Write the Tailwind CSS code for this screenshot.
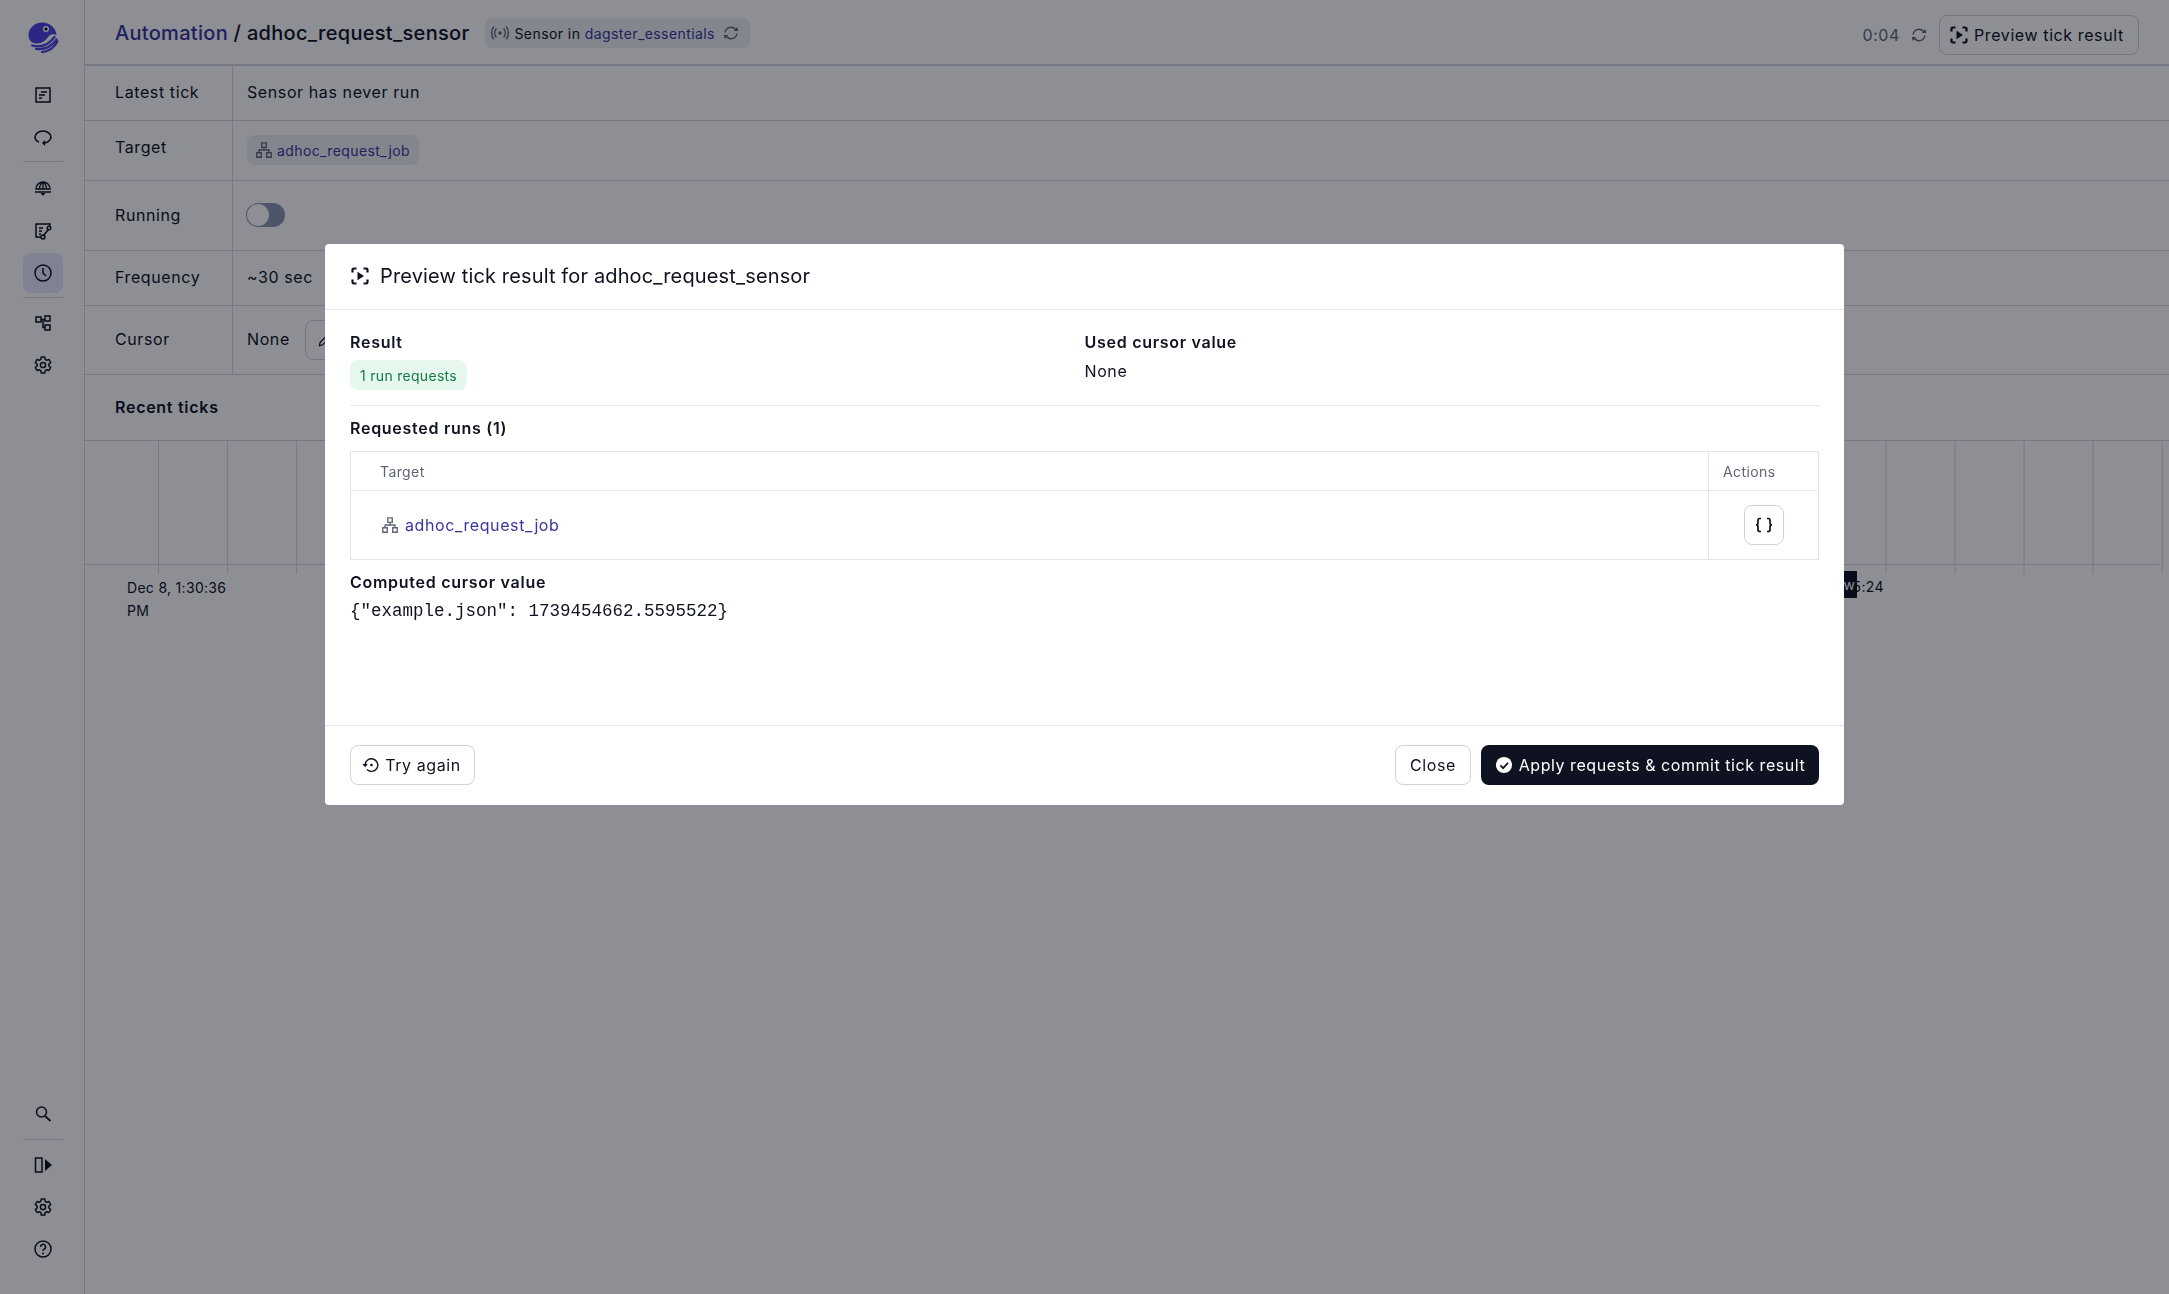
<!DOCTYPE html>
<html lang="en">
<head>
    <meta charset="UTF-8">
    <meta name="viewport" content="width=device-width, initial-scale=1.0">
    <title>adhoc_request_sensor</title>
    <script src="https://cdn.jsdelivr.net/npm/@tailwindcss/browser@4"></script>
</head>
<body class="h-[1294px] overflow-hidden bg-white font-['Inter','Liberation_Sans',sans-serif] text-[16px] tracking-[0.6px] text-[#0f1221]">
    <svg class="hidden">
        <symbol id="preview" viewBox="0 0 20 20">
            <path d="M2.500 6.500V3.800a1.300 1.300 0 0 1 1.300-1.300h2.700M13.500 2.500h2.700a1.300 1.300 0 0 1 1.300 1.300v2.700M2.500 13.500v2.700a1.300 1.300 0 0 0 1.300 1.300h2.700M13.500 17.500h2.700a1.300 1.300 0 0 0 1.300-1.300v-2.700" fill="none" stroke="currentColor" stroke-width="2.200"/>
            <path d="M7.500 5.800 14 10l-6.500 4.200z" fill="currentColor"/>
        </symbol>
        <symbol id="job" viewBox="0 0 20 20">
            <path d="M7.500 2h5v5h-5zM2 13h5v5H2zM13 13h5v5h-5zM10 7v3M4.500 13v-3h11v3" fill="none" stroke="currentColor" stroke-width="1.500"/>
        </symbol>
        <symbol id="refresh" viewBox="0 0 20 20">
            <path d="M3.500 9.500a6.500 6.500 0 0 1 11.300-3.700M16.500 10.500a6.500 6.500 0 0 1-11.300 3.700" fill="none" stroke="currentColor" stroke-width="1.600"/>
            <path d="M13 7.800h5l-1-4.500zM7 12.200H2l1 4.500z" fill="currentColor"/>
        </symbol>
        <symbol id="gear" viewBox="0 0 20 20">
            <path d="M8.300 2h3.400l.5 2.400 1.500.9 2.300-.8 1.700 3-1.800 1.600v1.800l1.800 1.600-1.700 3-2.300-.8-1.500.9-.5 2.400H8.300l-.5-2.400-1.500-.9-2.300.8-1.700-3 1.800-1.600V9.100L2.300 7.500l1.700-3 2.300.8 1.500-.9z" fill="none" stroke="currentColor" stroke-width="1.500" stroke-linejoin="round"/>
            <circle cx="10" cy="10" r="2.600" fill="none" stroke="currentColor" stroke-width="1.500"/>
        </symbol>
    </svg>

    <div class="flex h-[1294px]">
        <!-- left nav -->
        <nav class="flex w-[85px] shrink-0 flex-col items-center border-r border-[#d6d7de] pl-[2px]">
            <svg class="mt-[21px] h-[32px] w-[32px] text-[#4f43dd]" viewBox="0 0 32 32">
                <path d="M15 1.500C8 1.500 1.500 7 1.500 14c0 5 3.500 8.500 8 8.500 6 0 9-3 12-7 2-2.500 5-3 8-1.500C29 7 23 1.500 15 1.500z" fill="currentColor"/>
                <path d="M5 24.500c9 2.500 17-1 22.500-8.500M9 28c9 1 16-3 20.500-9.500M15 31c6-.5 12-4 15.500-10.500" fill="none" stroke="currentColor" stroke-width="2.200" stroke-linecap="round"/>
                <circle cx="19" cy="8" r="3" fill="#fff"/>
                <circle cx="19" cy="8" r="1.500" fill="#030615"/>
            </svg>
            <div class="mt-[22px] flex flex-col gap-[2px]">
                <a class="flex h-[40px] w-[40px] items-center justify-center">
                    <svg class="h-[20px] w-[20px]" viewBox="0 0 20 20"><path d="M3 3h14v14H3z" fill="none" stroke="currentColor" stroke-width="1.500"/><path d="M8 7h6M6 10h6M6 13h3" stroke="currentColor" stroke-width="1.500"/></svg>
                </a>
                <a class="flex h-[40px] w-[40px] items-center justify-center">
                    <svg class="h-[20px] w-[20px]" viewBox="0 0 20 20"><path d="M6 15C3 14 2 12 2 10c0-3 3.500-6 8-6s8 3 8 6-3.500 6-7 6" fill="none" stroke="currentColor" stroke-width="1.600"/><path d="M12 13l-3 3 3 3z" fill="currentColor"/></svg>
                </a>
            </div>
            <div class="mt-[4px] h-px w-[40px] bg-[#d6d7de]"></div>
            <div class="mt-[6px] flex flex-col gap-[2.5px]">
                <a class="flex h-[40px] w-[40px] items-center justify-center">
                    <svg class="h-[20px] w-[20px]" viewBox="0 0 20 20"><path d="M3 11a7 7 0 0 1 14 0zM10 4v7M6.500 11c0-3 1.500-5.500 3.500-7 2 1.500 3.500 4 3.500 7" fill="none" stroke="currentColor" stroke-width="1.400"/><path d="M2 14h16" stroke="currentColor" stroke-width="1.500"/><path d="M7.500 15h5L10 18z" fill="currentColor"/></svg>
                </a>
                <a class="flex h-[40px] w-[40px] items-center justify-center">
                    <svg class="h-[20px] w-[20px]" viewBox="0 0 20 20"><path d="M8 16H3V3h14v2" fill="none" stroke="currentColor" stroke-width="1.500"/><path d="M6 7h4M6 10h3M6 13h2M10 15l6-7" fill="none" stroke="currentColor" stroke-width="1.500"/><circle cx="16" cy="7" r="1.800" fill="none" stroke="currentColor" stroke-width="1.400"/><circle cx="10" cy="16" r="2" fill="none" stroke="currentColor" stroke-width="1.400"/></svg>
                </a>
                <a class="flex h-[40px] w-[40px] items-center justify-center rounded-[8px] bg-[#e8e7fc]">
                    <svg class="h-[20px] w-[20px]" viewBox="0 0 20 20"><circle cx="10" cy="10" r="8" fill="none" stroke="currentColor" stroke-width="1.500"/><path d="M10 5v5l3 3" fill="none" stroke="currentColor" stroke-width="1.500"/></svg>
                </a>
            </div>
            <div class="mt-[4px] h-px w-[40px] bg-[#d6d7de]"></div>
            <div class="mt-[5px] flex flex-col gap-[2px]">
                <a class="flex h-[40px] w-[40px] items-center justify-center">
                    <svg class="h-[20px] w-[20px]" viewBox="0 0 20 20"><path d="M3 4h5v5H3zM12 3h5v5h-5zM12 12h5v5h-5zM8 6.500h4M10 6.500v8h2" fill="none" stroke="currentColor" stroke-width="1.500"/></svg>
                </a>
                <a class="flex h-[40px] w-[40px] items-center justify-center">
                    <svg class="h-[20px] w-[20px]"><use href="#gear"/></svg>
                </a>
            </div>
            <div class="mt-auto flex flex-col items-center pb-[25px]">
                <a class="flex h-[40px] w-[40px] items-center justify-center">
                    <svg class="h-[20px] w-[20px]" viewBox="0 0 20 20"><circle cx="8.500" cy="8" r="5" fill="none" stroke="currentColor" stroke-width="1.500"/><path d="M12 12l5.500 5" stroke="currentColor" stroke-width="1.700"/></svg>
                </a>
                <div class="mt-[5px] h-px w-[40px] bg-[#d6d7de]"></div>
                <a class="mt-[5px] flex h-[40px] w-[40px] items-center justify-center">
                    <svg class="h-[20px] w-[20px]" viewBox="0 0 20 20"><path d="M2.500 3h6.500v14H2.500z" fill="none" stroke="currentColor" stroke-width="1.500"/><path d="M12 4l7 6-7 6z" fill="currentColor"/></svg>
                </a>
                <a class="mt-[2px] flex h-[40px] w-[40px] items-center justify-center">
                    <svg class="h-[20px] w-[20px]"><use href="#gear"/></svg>
                </a>
                <a class="mt-[2px] flex h-[40px] w-[40px] items-center justify-center">
                    <svg class="h-[20px] w-[20px]" viewBox="0 0 20 20"><circle cx="10" cy="10" r="8" fill="none" stroke="currentColor" stroke-width="1.500"/><path d="M7.500 8a2.500 2.500 0 1 1 3.800 2c-1 .6-1.300 1-1.300 2" fill="none" stroke="currentColor" stroke-width="1.500"/><circle cx="10" cy="14.500" r="1" fill="currentColor"/></svg>
                </a>
            </div>
        </nav>

        <main class="relative min-w-0 flex-1">
            <!-- page header -->
            <header class="flex h-[66px] items-start justify-between border-b-2 border-[#d6d7de] pr-[30px] pl-[30px]">
                <div class="flex h-[64px] items-center pt-[2px]">
                    <h1 class="text-[20px] font-medium tracking-[0.3px]"><a class="text-[#3a369c]">Automation</a> / adhoc_request_sensor</h1>
                    <span class="ml-[16px] flex h-[30px] items-center gap-[5px] rounded-[8px] bg-[#eeeff2] pr-[10px] pl-[6px] text-[14px] tracking-[0.42px]">
                        <svg class="h-[18px] w-[18px] text-[#5f6477]" viewBox="0 0 20 20"><circle cx="10" cy="10" r="2" fill="currentColor"/><path d="M6 5c-2.500 3-2.500 7 0 10M14 5c2.500 3 2.500 7 0 10M3 3c-3 4-3 10 0 14M17 3c3 4 3 10 0 14" fill="none" stroke="currentColor" stroke-width="1.500"/></svg>
                        <span>Sensor in <a class="text-[#3a369c]">dagster_essentials</a></span>
                        <svg class="ml-[2px] h-[18px] w-[18px] text-[#5f6477]"><use href="#refresh"/></svg>
                    </span>
                </div>
                <div class="flex h-[70px] items-center">
                    <span class="text-[#5f6477]">0:04</span>
                    <svg class="ml-[10px] h-[18px] w-[18px] text-[#5f6477]"><use href="#refresh"/></svg>
                    <button class="ml-[11px] flex h-[40px] w-[200px] items-center gap-[5px] rounded-[8px] border border-[#d1d2dc] pl-[9px]">
                        <svg class="h-[20px] w-[20px]"><use href="#preview"/></svg>
                        Preview tick result
                    </button>
                </div>
            </header>

            <!-- sensor details -->
            <div class="grid grid-cols-[148px_1fr] border-b border-[#d6d7de]">
                <div class="h-[55px] border-r border-b border-[#d6d7de] pt-[15px] pl-[30px] leading-[22px]">Latest tick</div>
                <div class="h-[55px] border-b border-[#d6d7de] pt-[15px] pl-[14px] leading-[22px]">Sensor has never run</div>
                <div class="h-[60px] border-r border-b border-[#d6d7de] pt-[15px] pl-[30px] leading-[22px]">Target</div>
                <div class="flex h-[60px] items-start border-b border-[#d6d7de] pt-[14px] pl-[14px]">
                    <span class="flex h-[30px] items-center gap-[4px] rounded-[8px] bg-[#eeeff2] pr-[9px] pl-[8px] text-[14px] tracking-[0.4px] text-[#3a369c]">
                        <svg class="h-[18px] w-[18px] text-[#5f6477]"><use href="#job"/></svg>
                        adhoc_request_job
                    </span>
                </div>
                <div class="h-[70px] border-r border-b border-[#d6d7de] pt-[23px] pl-[30px] leading-[22px]">Running</div>
                <div class="h-[70px] border-b border-[#d6d7de] pt-[22px] pl-[13px]">
                    <div class="flex h-[24px] w-[39px] items-center rounded-full bg-[#8f96b0] p-px">
                        <div class="h-[22px] w-[22px] rounded-full bg-white"></div>
                    </div>
                </div>
                <div class="h-[55px] border-r border-b border-[#d6d7de] pt-[15px] pl-[30px] leading-[22px]">Frequency</div>
                <div class="h-[55px] border-b border-[#d6d7de] pt-[15px] pl-[14px] leading-[22px]">~30 sec</div>
                <div class="h-[68px] border-r border-[#d6d7de] pt-[22px] pl-[30px] leading-[22px]">Cursor</div>
                <div class="flex h-[68px] items-start gap-[15px] pt-[14px] pl-[14px] leading-[22px]">
                    <span class="pt-[8px]">None</span>
                    <button class="flex h-[40px] w-[40px] items-center justify-center rounded-[8px] border border-[#d1d2dc]">
                        <svg class="h-[16px] w-[16px]" viewBox="0 0 20 20"><path d="M3 17l1-4L14 3l3 3L7 16z" fill="none" stroke="currentColor" stroke-width="1.500"/></svg>
                    </button>
                </div>
            </div>

            <!-- recent ticks -->
            <h2 class="flex h-[65px] items-center pb-[2px] pl-[30px] font-semibold tracking-[0.72px]">Recent ticks</h2>
            <div class="h-[134px] border-t border-[#d6d7de]">
                <div class="ml-[73px] h-full bg-[linear-gradient(to_right,#d6d7de_1px,transparent_1px)] bg-[length:69.1px_100%]"></div>
                <div class="-mt-[10px] h-px w-[2074px] bg-[#d6d7de]"></div>
            </div>
            <div class="w-[150px] pt-[2px] pl-[42px] text-[14px] leading-[23px] tracking-[0.3px]">Dec 8, 1:30:36 PM</div>
            <span class="absolute top-[575px] right-[285px] text-[14px] leading-[23px] tracking-[0.4px]">5:24</span>
            <span class="absolute top-[571px] right-[312px] flex h-[27px] w-[40px] items-center justify-end bg-[#0f1221] pr-[2px] text-[14px] tracking-normal text-white">Now</span>
        </main>
    </div>

    <!-- dialog -->
    <div class="fixed inset-0 flex justify-center bg-[rgba(3,6,21,0.45)] pt-[244px]">
        <div class="flex h-[561px] w-[1519px] flex-col rounded-[4px] bg-white">
            <div class="flex h-[66px] shrink-0 items-center gap-[10px] border-b border-[#e3e4e9] pb-[1px] pl-[25px] text-[20px] tracking-[0.14px]">
                <svg class="h-[20px] w-[20px]"><use href="#preview"/></svg>
                Preview tick result for adhoc_request_sensor
            </div>
            <div class="flex-1 px-[25px] pt-[22px]">
                <div class="grid grid-cols-2 border-b border-[#e3e4e9] pb-[15px]">
                    <div>
                        <div class="font-semibold leading-[20px] tracking-[0.72px]">Result</div>
                        <span class="mt-[8px] flex h-[30px] w-fit items-center rounded-[8px] bg-[#e6f7ee] px-[10px] text-[14px] tracking-[0.3px] text-[#117a45]">1 run requests</span>
                    </div>
                    <div>
                        <div class="font-semibold leading-[20px] tracking-[0.72px]">Used cursor value</div>
                        <div class="mt-[9px] leading-[20px]">None</div>
                    </div>
                </div>
                <div class="mt-[12px] font-semibold leading-[20px] tracking-[0.72px]">Requested runs (1)</div>
                <div class="mt-[13px] border border-[#e3e4e9]">
                    <div class="flex h-[39px] border-b border-[#e3e4e9] text-[14px] tracking-[0.4px] text-[#5f6477]">
                        <div class="flex flex-1 items-center pl-[29px]">Target</div>
                        <div class="flex w-[110px] items-center border-l border-[#e3e4e9] pl-[14px]">Actions</div>
                    </div>
                    <div class="flex h-[68px]">
                        <div class="flex flex-1 items-center gap-[6px] pl-[30px] text-[#3a369c]">
                            <svg class="h-[18px] w-[18px] text-[#5f6477]"><use href="#job"/></svg>
                            adhoc_request_job
                        </div>
                        <div class="flex w-[110px] items-center justify-center border-l border-[#e3e4e9]">
                            <button class="flex h-[40px] w-[40px] items-center justify-center rounded-[8px] border border-[#d1d2dc]">
                                <svg class="h-[20px] w-[20px]" viewBox="0 0 20 20"><path d="M7 3.500H5.500C4 3.500 4 4.500 4 5.500V8c0 1-.5 2-2 2 1.500 0 2 1 2 2v2.500c0 1 0 2 1.500 2H7M13 3.500h1.500C16 3.500 16 4.500 16 5.500V8c0 1 .5 2 2 2-1.500 0-2 1-2 2v2.500c0 1 0 2-1.500 2H13" fill="none" stroke="currentColor" stroke-width="1.700"/></svg>
                            </button>
                        </div>
                    </div>
                </div>
                <div class="mt-[12px] font-semibold leading-[20px] tracking-[0.72px]">Computed cursor value</div>
                <div class="mt-[8px] font-['Liberation_Mono',monospace] text-[17.5px] leading-[22px] tracking-normal">{"example.json": 1739454662.5595522}</div>
            </div>
            <div class="flex h-[80px] shrink-0 items-center justify-between border-t border-[#e3e4e9] px-[25px] pb-[1px]">
                <button class="flex h-[40px] w-[125px] items-center justify-center gap-[5px] rounded-[8px] border border-[#d1d2dc] pr-[2px]">
                    <svg class="h-[18px] w-[18px]" viewBox="0 0 20 20"><path d="M3.500 10a7 7 0 1 1 2 5" fill="none" stroke="currentColor" stroke-width="1.600"/><path d="M0.500 9h6l-3 3.500z" fill="currentColor"/><circle cx="10.500" cy="10" r="1.500" fill="currentColor"/></svg>
                    Try again
                </button>
                <div class="flex gap-[10px]">
                    <button class="h-[40px] w-[76px] rounded-[8px] border border-[#d1d2dc]">Close</button>
                    <button class="flex h-[40px] w-[338px] items-center justify-center gap-[6px] rounded-[8px] bg-[#0f1221] tracking-[0.55px] text-white">
                        <svg class="h-[18px] w-[18px]" viewBox="0 0 20 20"><circle cx="10" cy="10" r="9" fill="#fff"/><path d="M6 10.500l3 3 5.500-6" fill="none" stroke="#0f1221" stroke-width="2"/></svg>
                        Apply requests &amp; commit tick result
                    </button>
                </div>
            </div>
        </div>
    </div>
</body>
</html>
